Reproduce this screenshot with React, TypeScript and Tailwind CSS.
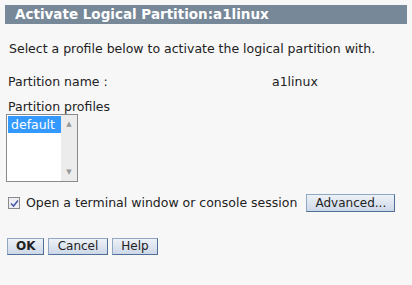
import React from 'react';

const font = { fontFamily: '"DejaVu Sans", Verdana, sans-serif' };

const Btn: React.FC<{ label: string; bold?: boolean; className?: string }> = ({ label, bold, className }) => (
  <button
    className={`h-[17px] border border-[#8fa6c4] border-r-[#4f6f98] border-b-[#4f6f98] bg-gradient-to-b from-[#eef2f8] to-[#cdd8e7] px-2 text-[12px] leading-[15px] text-[#222] ${bold ? 'font-bold' : ''} ${className ?? ''}`}
  >
    {label}
  </button>
);

export default function App() {
  return (
    <div className="h-[285px] w-[412px] bg-[#f7f7f7] pt-[5px] text-[#222]" style={font}>
      <div className="mx-[5px] h-[19px] bg-[#778899] pl-[10px] text-[13.5px] font-bold leading-[19px] text-white">
        Activate Logical Partition:a1linux
      </div>

      <p className="mt-[17px] pl-[9px] text-[12.5px] leading-[15px]">
        Select a profile below to activate the logical partition with.
      </p>

      <div className="mt-[18px] flex pl-[8px] text-[12.5px] leading-[15px]">
        <span className="w-[264px]">Partition name :</span>
        <span>a1linux</span>
      </div>

      <div className="mt-[10px] pl-[8px] text-[12.5px] leading-[15px]">Partition profiles</div>

      <div className="ml-[6px] flex h-[68px] w-[72px] border border-[#8a8a8a] bg-white">
        <div className="flex-1 pt-[1px] pl-[1px]">
          <div className="h-[17px] bg-[#3399ff] pl-[3px] text-[12.5px] leading-[17px] text-white">default</div>
        </div>
        <div className="flex w-[16px] flex-col items-center justify-between bg-[#ececec] py-[4px] text-[7px] text-[#999]">
          <span>▲</span>
          <span>▼</span>
        </div>
      </div>

      <div className="mt-[12px] flex items-center pl-[8px] text-[12.5px]">
        <span className="flex h-[12px] w-[12px] items-center justify-center border border-[#8a8a8a] bg-[#eeeef4]">
          <svg width="9" height="9" viewBox="0 0 9 9">
            <path d="M1 4.5 L3.5 7 L8 1.5" stroke="#4a5aa8" strokeWidth="1.6" fill="none" />
          </svg>
        </span>
        <span className="ml-[6px]">Open a terminal window or console session</span>
        <Btn label="Advanced..." className="ml-[9px] h-[18px] w-[89px]" />
      </div>

      <div className="mt-[25px] flex gap-[4px] pl-[7px]">
        <Btn label="OK" bold className="w-[37px]" />
        <Btn label="Cancel" className="w-[60px]" />
        <Btn label="Help" className="w-[46px]" />
      </div>
    </div>
  );
}
